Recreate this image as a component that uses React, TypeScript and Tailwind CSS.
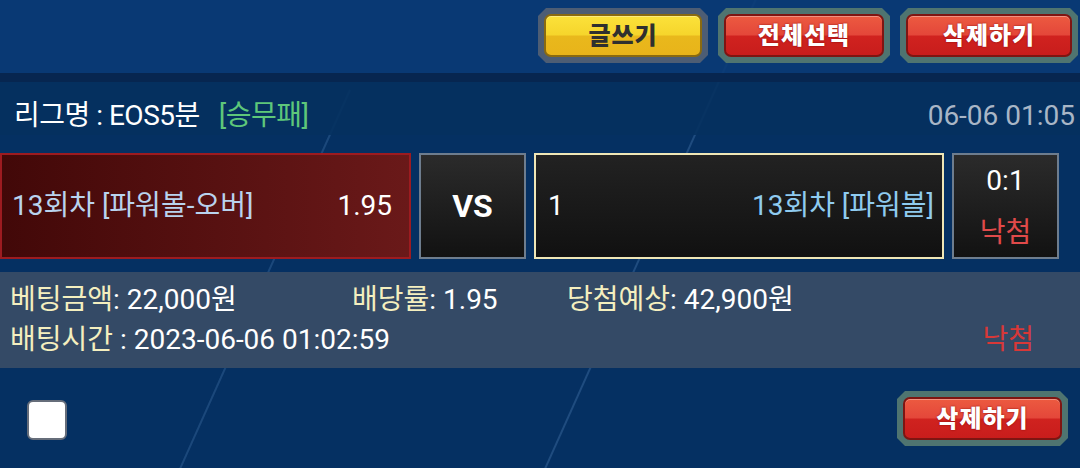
import React from 'react';

type BtnProps = { label: string; tone: 'yellow' | 'red'; width: string };

function GameButton({ label, tone, width }: BtnProps) {
  const frame = tone === 'yellow' ? 'bg-[#4d5d74]' : 'bg-[#4f7470]';
  const inner =
    tone === 'yellow'
      ? 'bg-[linear-gradient(to_bottom,#fbe23a_0%,#f6d52c_48%,#e9b81c_52%,#e8b41a_100%)] border-[#8a6a10] text-[#2f2f2f]'
      : 'bg-[linear-gradient(to_bottom,#ec5a40_0%,#e4473a_48%,#d0221f_52%,#c81d1c_100%)] border-[#7e1512] text-white [text-shadow:0_0_2px_rgba(120,0,0,0.9)]';
  return (
    <div
      className={`${frame} ${width} h-[55px] p-[6px] [clip-path:polygon(8px_0,calc(100%-8px)_0,100%_8px,100%_calc(100%-8px),calc(100%-8px)_100%,8px_100%,0_calc(100%-8px),0_8px)]`}
    >
      <div
        className={`${inner} w-full h-full rounded-[7px] border-2 flex items-center justify-center text-[24px] font-black tracking-[1px] shadow-[inset_0_1px_0_rgba(255,255,255,0.35)]`}
      >
        {label}
      </div>
    </div>
  );
}

export default function App() {
  return (
    <div className="relative w-[1080px] h-[468px] overflow-hidden bg-[#053062] font-['Roboto','Noto_Sans_CJK_KR',sans-serif]">
      <svg className="absolute inset-0 pointer-events-none" width="1080" height="468">
        <line x1="760" y1="-10" x2="540" y2="480" stroke="#6f9fd6" strokeOpacity="0.25" strokeWidth="2" />
        <line x1="350" y1="90" x2="175" y2="480" stroke="#6f9fd6" strokeOpacity="0.22" strokeWidth="2" />
      </svg>

      <div className="relative">
        {/* top buttons */}
        <div className="h-[73px] bg-[#0a3b77]/90 flex items-center justify-end gap-[10px] pr-[2px] pb-[2px]">
          <GameButton label="글쓰기" tone="yellow" width="w-[170px]" />
          <GameButton label="전체선택" tone="red" width="w-[172px]" />
          <GameButton label="삭제하기" tone="red" width="w-[178px]" />
        </div>
        <div className="h-[9px] bg-[#072650]" />

        {/* league row */}
        <div className="h-[53px] bg-[#06315f]/90 flex items-center justify-between pl-[14px] pr-[5px] pt-[14px] text-[28px]">
          <div className="flex items-center tracking-[-0.5px]">
            <span className="text-white">리그명 : EOS5분</span>
            <span className="ml-[19px] text-[#5ec77a]">[승무패]</span>
          </div>
          <span className="text-[#a9b6c6]">06-06 01:05</span>
        </div>

        {/* match cards */}
        <div className="mt-[18px] h-[106px] flex gap-[8px] text-[28px]">
          <div className="w-[411px] border-2 border-[#9d1b20] bg-[linear-gradient(to_right,#420808,#6a1919)] flex items-center justify-between pl-[10px] pr-[17px]">
            <span className="text-[#b9d3ee]">13회차 [파워볼-오버]</span>
            <span className="text-white">1.95</span>
          </div>
          <div className="w-[107px] border-2 border-[#6e7d8e] bg-[linear-gradient(to_bottom,#2b2b2b,#121212)] flex items-center justify-center text-white font-bold text-[32px]">
            VS
          </div>
          <div className="w-[410px] border-2 border-[#efe6b6] bg-[linear-gradient(to_bottom,#222222,#111111)] flex items-center justify-between pl-[12px] pr-[8px]">
            <span className="text-white">1</span>
            <span className="text-[#8fcbef]">13회차 [파워볼]</span>
          </div>
          <div className="w-[107px] border-2 border-[#6e7d8e] bg-[linear-gradient(to_bottom,#2b2b2b,#121212)] flex flex-col items-center justify-center gap-[24px] pt-[2px]">
            <span className="text-white leading-none">0:1</span>
            <span className="text-[#e04a4a] leading-none">낙첨</span>
          </div>
        </div>

        {/* info panel */}
        <div className="mt-[13px] h-[96px] bg-[#344a66] pl-[10px] pr-[46px] flex flex-col justify-center gap-[8px] text-[28px] leading-[32px]">
          <div className="flex">
            <div className="w-[342px]">
              <span className="text-[#f4efbf]">베팅금액</span>
              <span className="text-white">: 22,000원</span>
            </div>
            <div className="w-[215px]">
              <span className="text-[#f4efbf]">배당률</span>
              <span className="text-white">: 1.95</span>
            </div>
            <div>
              <span className="text-[#f4efbf]">당첨예상</span>
              <span className="text-white">: 42,900원</span>
            </div>
          </div>
          <div className="flex justify-between">
            <div>
              <span className="text-[#f4efbf]">배팅시간</span>
              <span className="text-white"> : 2023-06-06 01:02:59</span>
            </div>
            <span className="text-[#d83838]">낙첨</span>
          </div>
        </div>

        {/* bottom row */}
        <div className="flex items-start justify-between pl-[27px] pr-[12px]">
          <div className="mt-[32px] w-[40px] h-[40px] rounded-[6px] border-2 border-[#666d7a] bg-white" />
          <div className="mt-[23px]">
            <GameButton label="삭제하기" tone="red" width="w-[171px]" />
          </div>
        </div>
      </div>
    </div>
  );
}
